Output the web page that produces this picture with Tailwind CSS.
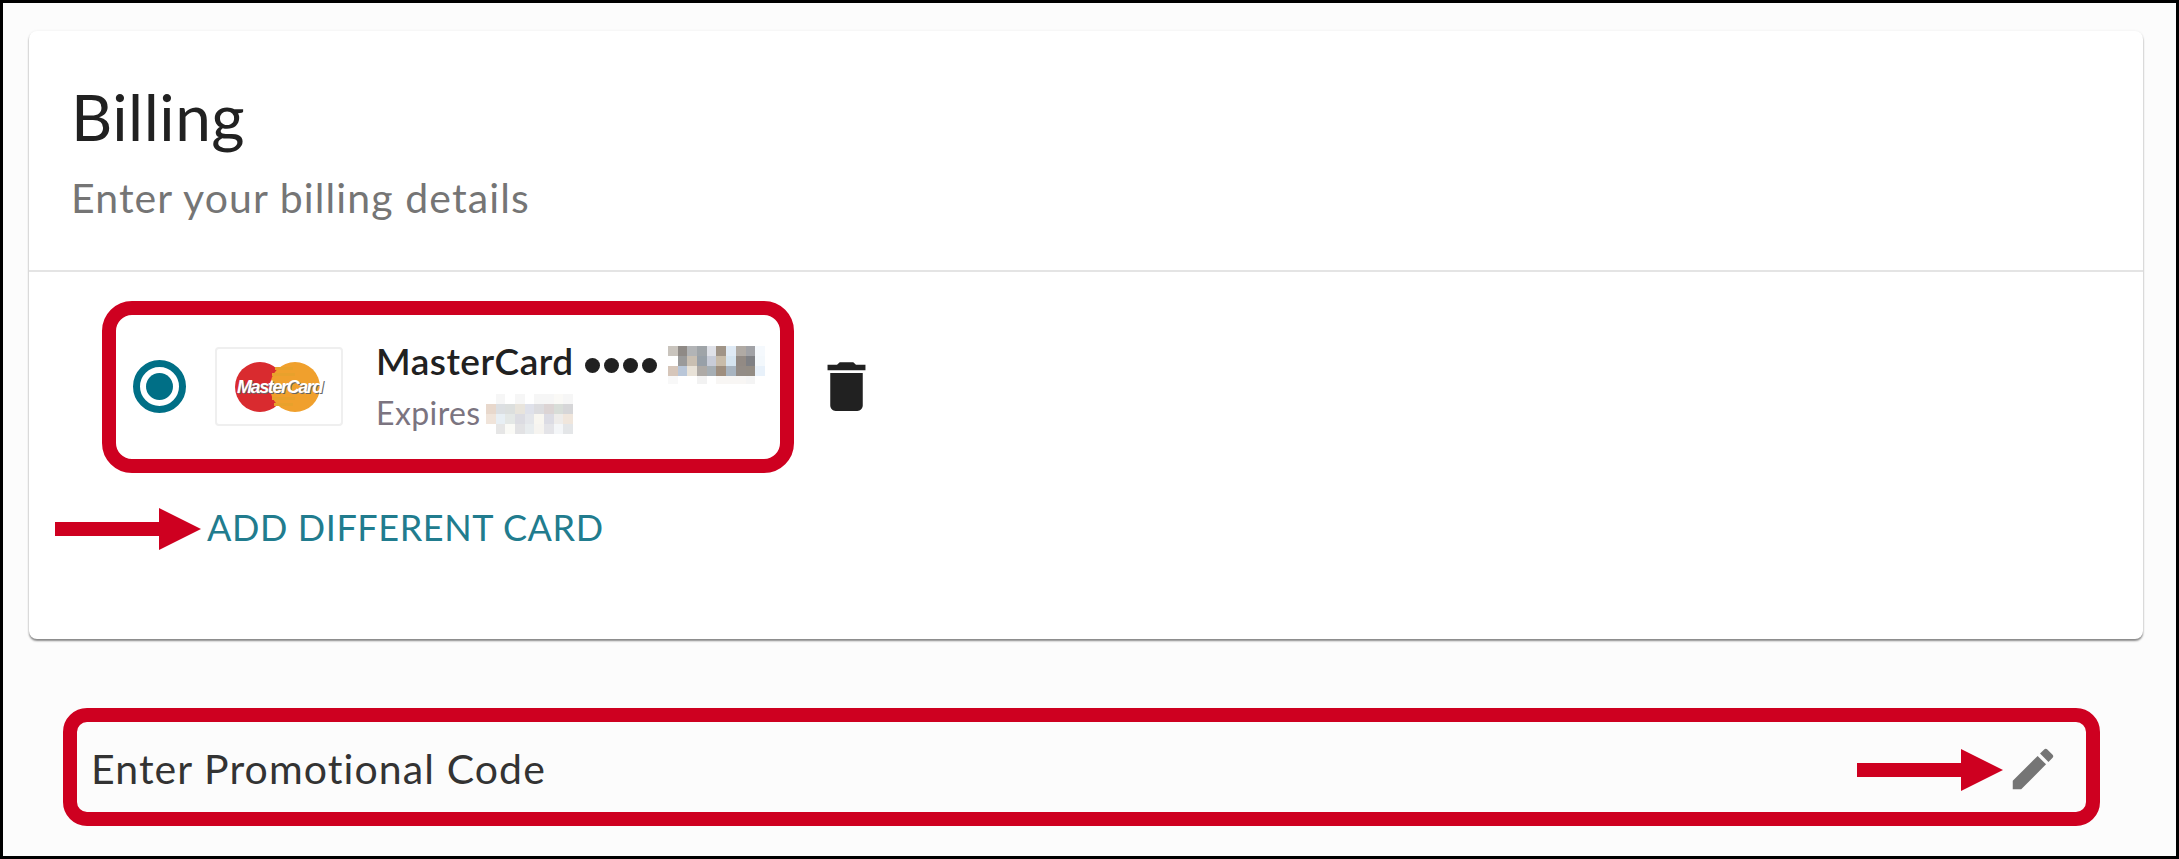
<!DOCTYPE html>
<html lang="en">
<head>
    <meta charset="UTF-8">
    <title>Billing</title>
    <script src="https://cdn.jsdelivr.net/npm/@tailwindcss/browser@4"></script>
</head>
<body class="bg-white">
    <div class="relative w-[2179px] h-[859px] overflow-hidden bg-[#fcfcfc] border-[3px] border-black font-['Lato','Open_Sans',sans-serif]">

        <!-- Billing card -->
        <section class="ml-[26px] mt-[28px] w-[2114px] h-[608px] bg-white rounded-lg shadow-[0_2px_2px_rgba(0,0,0,0.45),0_0_3px_rgba(0,0,0,0.06)]">
            <header class="h-[241px] pl-[43px] pt-[51px] border-b-2 border-[#e4e4e4]">
                <h1 class="-ml-[1px] text-[64px] leading-[70px] font-normal text-[#212121] tracking-[0.5px]">Billing</h1>
                <p class="mt-[23px] -ml-[1px] text-[41px] leading-[46px] text-[#757575] tracking-[1.1px]">Enter your billing details</p>
            </header>

            <div class="pl-[104px] pt-[67px] flex items-center">
                <!-- radio -->
                <div class="w-[53px] h-[53px] rounded-full border-[7px] border-[#006f86] flex items-center justify-center">
                    <div class="w-[27px] h-[27px] rounded-full bg-[#006f86]"></div>
                </div>

                <!-- card logo -->
                <div class="relative ml-[29px] w-[128px] h-[79px] rounded border-2 border-[#efefef] bg-white">
                    <svg class="absolute left-0 top-0" width="124" height="75" viewBox="0 0 124 75">
                        <circle cx="43" cy="38" r="25" fill="#d92b2f"/>
                        <circle cx="78" cy="38" r="25" fill="#f0a02d"/>
                        <g fill="#e8a12c">
                            <rect x="58" y="18" width="18" height="3"/>
                            <rect x="55" y="24" width="23" height="3"/>
                            <rect x="55" y="48" width="23" height="3"/>
                            <rect x="57" y="54" width="19" height="3"/>
                        </g>
                    </svg>
                    <span class="absolute left-[20px] top-[27px] font-['Liberation_Sans'] text-[18px] leading-[22px] font-bold italic tracking-[-1.4px] text-white [text-shadow:1px_1px_0_#666]">MasterCard</span>
                </div>

                <!-- card text -->
                <div class="ml-[33px] w-[438px] pt-[6px] flex flex-col">
                    <div class="flex items-center h-[40px]">
                        <span class="w-[209px] pb-[8px] text-[37px] leading-[40px] font-semibold text-[#212121] tracking-[0.5px]">MasterCard</span>
                        <span class="flex gap-[4px]">
                            <i class="w-[15px] h-[15px] rounded-full bg-[#212121]"></i>
                            <i class="w-[15px] h-[15px] rounded-full bg-[#212121]"></i>
                            <i class="w-[15px] h-[15px] rounded-full bg-[#212121]"></i>
                            <i class="w-[15px] h-[15px] rounded-full bg-[#212121]"></i>
                        </span>
                        <div class="ml-[11px] w-[97px] grid grid-cols-10">
                            <i class="h-[10px] bg-[#c9c4bd]"></i><i class="h-[10px] bg-[#8f8a86]"></i><i class="h-[10px] bg-[#b2b4b6]"></i><i class="h-[10px] bg-[#9fa4a8]"></i><i class="h-[10px] bg-[#dfe1e8]"></i><i class="h-[10px] bg-[#a09487]"></i><i class="h-[10px] bg-[#dfeaf5]"></i><i class="h-[10px] bg-[#b0aaa4]"></i><i class="h-[10px] bg-[#a1a2a6]"></i><i class="h-[10px] bg-[#f5f9fd]"></i>
                            <i class="h-[10px] bg-white"></i><i class="h-[10px] bg-[#9a9a9a]"></i><i class="h-[10px] bg-[#c9bfb2]"></i><i class="h-[10px] bg-[#98a0a8]"></i><i class="h-[10px] bg-[#c8ccd8]"></i><i class="h-[10px] bg-[#c8bcaa]"></i><i class="h-[10px] bg-[#d5e4f0]"></i><i class="h-[10px] bg-[#928a84]"></i><i class="h-[10px] bg-[#7f8084]"></i><i class="h-[10px] bg-[#f3f8fc]"></i>
                            <i class="h-[10px] bg-[#d6c6ba]"></i><i class="h-[10px] bg-[#b9c6d8]"></i><i class="h-[10px] bg-[#e8e2d8]"></i><i class="h-[10px] bg-[#aeaaa6]"></i><i class="h-[10px] bg-[#a6aeb4]"></i><i class="h-[10px] bg-[#9e8e7e]"></i><i class="h-[10px] bg-[#a8b4c0]"></i><i class="h-[10px] bg-[#938c86]"></i><i class="h-[10px] bg-[#938c84]"></i><i class="h-[10px] bg-[#e8f1fa]"></i>
                            <i class="h-[8px] bg-[#f8f8f8]"></i><i class="h-[8px] bg-white"></i><i class="h-[8px] bg-white"></i><i class="h-[8px] bg-[#f2f2f2]"></i><i class="h-[8px] bg-white"></i><i class="h-[8px] bg-[#f8f6f4]"></i><i class="h-[8px] bg-[#f8f6f4]"></i><i class="h-[8px] bg-[#f8f6f4]"></i><i class="h-[8px] bg-[#f4f4f4]"></i><i class="h-[8px] bg-white"></i>
                        </div>
                    </div>
                    <div class="mt-[9px] flex items-center h-[40px]">
                        <span class="w-[110px] pb-[2px] text-[32px] leading-[40px] text-[#7b7480] tracking-[0.4px]">Expires</span>
                        <div class="w-[87px] grid grid-cols-9">
                            <i class="h-[10px] bg-white"></i><i class="h-[10px] bg-[#f6f6f6]"></i><i class="h-[10px] bg-white"></i><i class="h-[10px] bg-[#f6f6f6]"></i><i class="h-[10px] bg-white"></i><i class="h-[10px] bg-[#f6f6f6]"></i><i class="h-[10px] bg-[#f6f6f6]"></i><i class="h-[10px] bg-[#faf9f6]"></i><i class="h-[10px] bg-[#f6f6f6]"></i>
                            <i class="h-[10px] bg-[#e8d8cc]"></i><i class="h-[10px] bg-[#dcdfe2]"></i><i class="h-[10px] bg-[#dcdfde]"></i><i class="h-[10px] bg-[#e8e4dc]"></i><i class="h-[10px] bg-[#dfe1ea]"></i><i class="h-[10px] bg-[#dcdcdf]"></i><i class="h-[10px] bg-[#dcd4d4]"></i><i class="h-[10px] bg-[#d8ddd8]"></i><i class="h-[10px] bg-[#d6d6d8]"></i>
                            <i class="h-[10px] bg-[#f0e4da]"></i><i class="h-[10px] bg-[#e8eff4]"></i><i class="h-[10px] bg-[#e4e8e6]"></i><i class="h-[10px] bg-[#dcdce2]"></i><i class="h-[10px] bg-[#e4e6ea]"></i><i class="h-[10px] bg-[#f8f6f0]"></i><i class="h-[10px] bg-[#dcdce4]"></i><i class="h-[10px] bg-[#eeecea]"></i><i class="h-[10px] bg-[#f0e6dc]"></i>
                            <i class="h-[10px] bg-white"></i><i class="h-[10px] bg-[#e6e6e6]"></i><i class="h-[10px] bg-[#fafaf6]"></i><i class="h-[10px] bg-[#e2e2e4]"></i><i class="h-[10px] bg-[#e8ecee]"></i><i class="h-[10px] bg-[#f6f4f0]"></i><i class="h-[10px] bg-[#e4e4e8]"></i><i class="h-[10px] bg-[#f4f6f8]"></i><i class="h-[10px] bg-[#e4e6e8]"></i>
                        </div>
                    </div>
                </div>

                <!-- trash -->
                <svg class="w-[65px] h-[65px]" viewBox="0 0 24 24" fill="#212121"><path d="M6 19c0 1.1.9 2 2 2h8c1.1 0 2-.9 2-2V7H6v12zM19 4h-3.5l-1-1h-5l-1 1H5v2h14V4z"/></svg>
            </div>

            <a class="block ml-[178px] mt-[71px] text-[36px] leading-[44px] text-[#217c8e] tracking-[0.6px]">ADD DIFFERENT CARD</a>
        </section>

        <!-- Promo code row -->
        <div class="ml-[88px] mt-[103px] w-[1969px] flex items-center justify-between">
            <span class="text-[41px] leading-[50px] text-[#333333] tracking-[1.1px]">Enter Promotional Code</span>
            <svg class="w-[54px] h-[54px]" viewBox="0 0 24 24" fill="#757575"><path d="M3 17.25V21h3.75L17.81 9.94l-3.75-3.75L3 17.25zM20.71 7.04c.39-.39.39-1.02 0-1.41l-2.34-2.34c-.39-.39-1.02-.39-1.41 0l-1.83 1.83 3.75 3.75 1.83-1.83z"/></svg>
        </div>

        <!-- Red annotations -->
        <div class="absolute left-[99px] top-[298px] w-[692px] h-[172px] border-[14px] border-[#ce0020] rounded-[30px]"></div>
        <div class="absolute left-[60px] top-[705px] w-[2037px] h-[118px] border-[14px] border-[#ce0020] rounded-[24px]"></div>

        <svg class="absolute left-[52px] top-[505px]" width="146" height="42" viewBox="0 0 146 42" fill="#ce0020"><path d="M0 14H104V0L146 21L104 42V28H0Z"/></svg>
        <svg class="absolute left-[1854px] top-[746px]" width="146" height="42" viewBox="0 0 146 42" fill="#ce0020"><path d="M0 14H104V0L146 21L104 42V28H0Z"/></svg>
    </div>
</body>
</html>
